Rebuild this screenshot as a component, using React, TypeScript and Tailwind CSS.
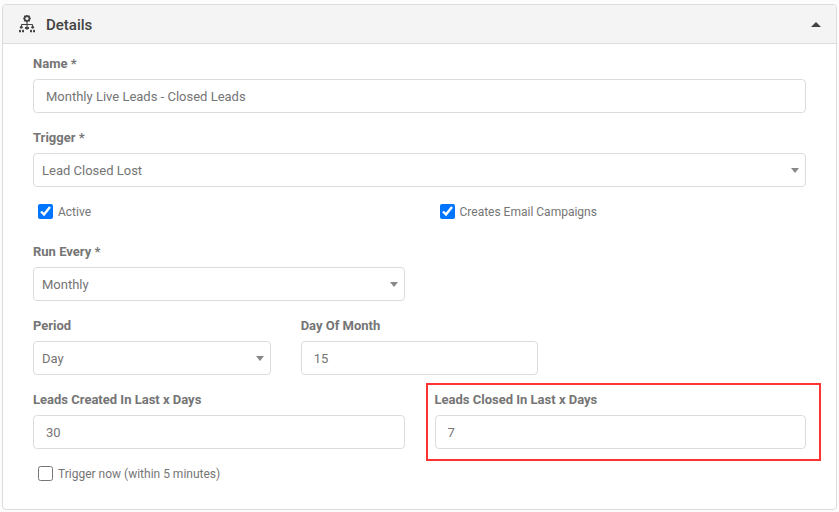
import React, { useState } from "react";

const inputClass =
  "block h-[34px] w-full rounded border border-[#dcdcdc] bg-white px-3 text-[13px] text-[#757575] outline-none";

type FieldProps = {
  id: string;
  label: string;
  children: React.ReactNode;
};

const Field = ({ id, label, children }: FieldProps) => (
  <div className="flex flex-col gap-[5px]">
    <label
      htmlFor={id}
      className="text-[13px] leading-5 font-bold text-[#757575]"
    >
      {label}
    </label>
    {children}
  </div>
);

type TextInputProps = { id: string; defaultValue: string };

const TextInput = ({ id, defaultValue }: TextInputProps) => (
  <input id={id} type="text" defaultValue={defaultValue} className={inputClass} />
);

type SelectProps = { id: string; options: string[] };

const Select = ({ id, options }: SelectProps) => (
  <div className="relative">
    <select
      id={id}
      className="block h-[34px] w-full appearance-none rounded border border-[#dcdcdc] bg-white pt-0.5 pr-6 pl-2 text-[13px] text-[#757575] outline-none"
    >
      {options.map((option) => (
        <option key={option}>{option}</option>
      ))}
    </select>
    <svg
      viewBox="0 0 8 5"
      className="pointer-events-none absolute top-[15px] right-[7px] h-[5px] w-2"
      fill="#888"
    >
      <path d="M0 0h8L4 5z" />
    </svg>
  </div>
);

type CheckProps = { id: string; label: string; checked?: boolean };

const Check = ({ id, label, checked = false }: CheckProps) => (
  <div className="flex h-[19px] items-center gap-[5px] pl-[5px]">
    <input
      id={id}
      type="checkbox"
      defaultChecked={checked}
      className="size-[15px]"
    />
    <label htmlFor={id} className="pt-px text-xs text-[#757575]">
      {label}
    </label>
  </div>
);

const WorkflowIcon = () => (
  <svg viewBox="0 0 18 18" className="size-[18px]" fill="#424242">
    {/* gear */}
    <circle cx="9" cy="3.5" r="2.4" fill="none" stroke="#424242" strokeWidth="1.6" />
    <path
      d="M9-.3v1.3M9 6v1.3M5.2 3.5h1.3M11.5 3.5h1.3M6.3.8l.9.9M11.7.8l-.9.9M6.3 6.2l.9-.9M11.7 6.2l-.9-.9"
      stroke="#424242"
      strokeWidth="1.5"
    />
    {/* branches */}
    <path
      d="M9 7V12M3.5 11.5V10q0-.5.5-.5h10q.5 0 .5.5v1.5"
      fill="none"
      stroke="#424242"
      strokeWidth="1.1"
    />
    {/* people */}
    <circle cx="3.3" cy="12.3" r="1.4" />
    <path d="M7 12h4v1.2L9.8 14.6H8.2L7 13.2z" />
    <circle cx="14.7" cy="12.3" r="1.4" />
    <path d="M1 17.2v-2l1-.6 1 .8v1.8zM4 17.2v-1.8l1-.8 1 .6v2zM12 17.2v-2l1-.6 1 .8v1.8zM15 17.2v-1.8l1-.8 1 .6v2z" />
  </svg>
);

const App = () => {
  const [open, setOpen] = useState(true);

  return (
    <main className="min-h-screen bg-[#fcfcfc] px-0.5 pt-1 pb-0.5 font-['Roboto',sans-serif]">
      <section className="overflow-hidden rounded border border-[#dcdcdc] bg-white">
        <header className="border-b border-[#dcdcdc] bg-[#f4f4f4]">
          <button
            type="button"
            aria-expanded={open}
            onClick={() => setOpen((prev) => !prev)}
            className="flex h-[38px] w-full items-center px-[15px] text-[#424242]"
          >
            <WorkflowIcon />
            <span className="ml-2.5 pt-0.5 text-[15px] font-medium">
              Details
            </span>
            <svg
              viewBox="0 0 10 5"
              className="ml-auto h-[5px] w-2.5"
              fill="currentColor"
            >
              <path d={open ? "M0 5h10L5 0z" : "M0 0h10L5 5z"} />
            </svg>
          </button>
        </header>
        {open && (
          <form className="flex flex-col gap-[15px] px-[30px] pt-2.5 pb-[26px]">
            <Field id="name" label="Name *">
              <TextInput
                id="name"
                defaultValue="Monthly Live Leads - Closed Leads"
              />
            </Field>
            <Field id="trigger" label="Trigger *">
              <Select id="trigger" options={["Lead Closed Lost"]} />
            </Field>
            <div className="mb-1.5 grid grid-cols-2 gap-[30px]">
              <Check id="active" label="Active" checked />
              <Check id="campaigns" label="Creates Email Campaigns" checked />
            </div>
            <div className="grid grid-cols-2 gap-[30px]">
              <Field id="run-every" label="Run Every *">
                <Select id="run-every" options={["Monthly"]} />
              </Field>
            </div>
            <div className="grid grid-cols-3 gap-[30px]">
              <Field id="period" label="Period">
                <Select id="period" options={["Day"]} />
              </Field>
              <Field id="day-of-month" label="Day Of Month">
                <TextInput id="day-of-month" defaultValue="15" />
              </Field>
            </div>
            <div className="grid grid-cols-2 gap-[30px]">
              <Field id="leads-created" label="Leads Created In Last x Days">
                <TextInput id="leads-created" defaultValue="30" />
              </Field>
              <div className="relative">
                <Field id="leads-closed" label="Leads Closed In Last x Days">
                  <TextInput id="leads-closed" defaultValue="7" />
                </Field>
                {/* highlight frame */}
                <div className="pointer-events-none absolute -top-[7px] -right-[15px] -bottom-3 -left-[9px] border-2 border-[#ff3333]" />
              </div>
            </div>
            <Check id="trigger-now" label="Trigger now (within 5 minutes)" />
          </form>
        )}
      </section>
    </main>
  );
};

export default App;
